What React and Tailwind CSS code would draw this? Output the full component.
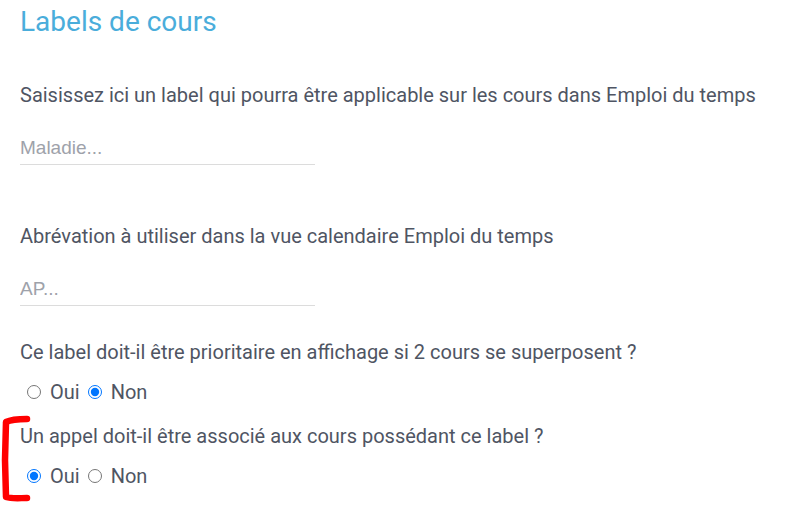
import { useState } from 'react';

const Radio = ({ name, value, checked, onChange, label }) => (
    <label className="flex items-center">
        <input
            type="radio"
            name={name}
            checked={checked}
            onChange={() => onChange(value)}
            className="m-0 w-[14px] h-[14px] accent-[#0075ff]"
        />
        <span className="ml-[9px] mr-[8px]">{label}</span>
    </label>
);

const App = () => {
    const [prio, setPrio] = useState('non');
    const [appel, setAppel] = useState('oui');

    return (
        <div className="relative w-[788px] h-[505px] bg-white overflow-hidden font-['Roboto',sans-serif] text-[#4f5563]">
            <div className="pl-[20px] pt-[5px]">
                <h1 className="text-[28px] leading-[34px] text-[#4aaddb]">Labels de cours</h1>

                <p className="mt-[43px] text-[20px] leading-[26px]">
                    Saisissez ici un label qui pourra être applicable sur les cours dans Emploi du temps
                </p>
                <input
                    type="text"
                    placeholder="Maladie..."
                    className="mt-[26px] block w-[295px] h-[31px] border-b border-[#dcdcdc] outline-none text-[19px] font-['Liberation_Sans',sans-serif] placeholder:text-[#9ea2aa] pb-[2px]"
                />

                <p className="mt-[58px] text-[20px] leading-[26px]">
                    Abrévation à utiliser dans la vue calendaire Emploi du temps
                </p>
                <input
                    type="text"
                    placeholder="AP..."
                    className="mt-[26px] block w-[295px] h-[31px] border-b border-[#dcdcdc] outline-none text-[19px] font-['Liberation_Sans',sans-serif] placeholder:text-[#9ea2aa] pb-[2px]"
                />

                <p className="mt-[33px] text-[20px] leading-[26px]">
                    Ce label doit-il être prioritaire en affichage si 2 cours se superposent ?
                </p>
                <div className="mt-[14px] ml-[7px] flex items-center text-[20px] leading-[26px]">
                    <Radio name="prio" value="oui" checked={prio === 'oui'} onChange={setPrio} label="Oui" />
                    <Radio name="prio" value="non" checked={prio === 'non'} onChange={setPrio} label="Non" />
                </div>

                <p className="mt-[18px] text-[20px] leading-[26px]">
                    Un appel doit-il être associé aux cours possédant ce label ?
                </p>
                <div className="mt-[14px] ml-[7px] flex items-center text-[20px] leading-[26px]">
                    <Radio name="appel" value="oui" checked={appel === 'oui'} onChange={setAppel} label="Oui" />
                    <Radio name="appel" value="non" checked={appel === 'non'} onChange={setAppel} label="Non" />
                </div>
            </div>

            {/* red annotation bracket */}
            <svg className="absolute left-0 top-[410px]" width="40" height="95" viewBox="0 0 40 95">
                <path
                    d="M27 9 C18 9 10 10 6 12 L5 50 L6 87 C12 89 20 88 27 88"
                    fill="none"
                    stroke="#ff0000"
                    strokeWidth="6.5"
                    strokeLinecap="round"
                    strokeLinejoin="round"
                />
            </svg>
        </div>
    );
};

export default App;
